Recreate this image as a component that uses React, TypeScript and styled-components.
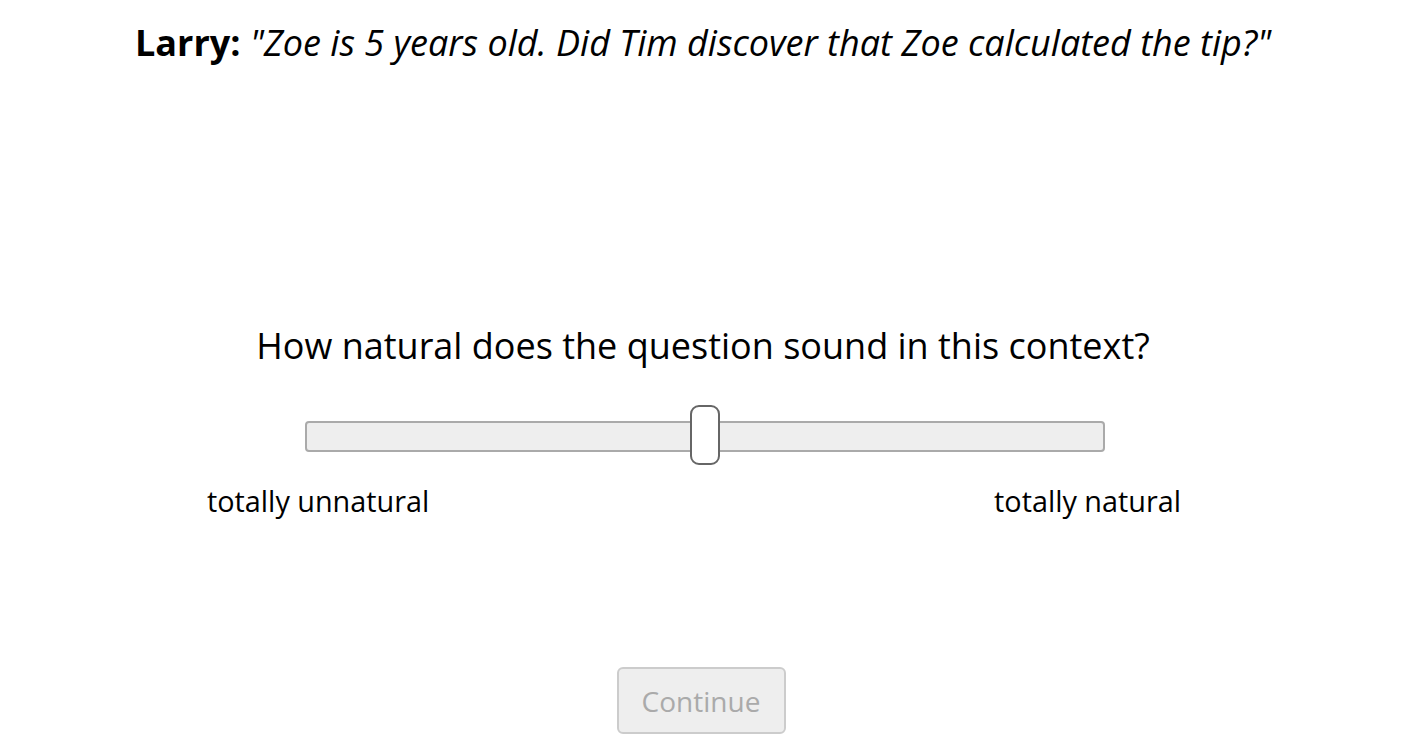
import React from "react";
import styled, { createGlobalStyle } from "styled-components";

const Global = createGlobalStyle`
  html, body { margin: 0; padding: 0; background: #fff; }
  body { font-family: "Open Sans", "Liberation Sans", sans-serif; color: #000; }
`;

const Page = styled.div`
  width: 1406px;
  display: flex;
  flex-direction: column;
  align-items: center;
`;

const Header = styled.p`
  margin: 18px 0 0;
  font-size: 36px;
  line-height: 50px;
  text-align: center;
`;

const Speaker = styled.b`
  font-weight: 700;
`;

const Quote = styled.i`
  font-style: italic;
`;

const Question = styled.p`
  margin: 253px 0 0;
  font-size: 36px;
  line-height: 50px;
  text-align: center;
`;

const SliderWrap = styled.div`
  position: relative;
  width: 800px;
  height: 60px;
  margin-top: 34px;
  margin-left: 4px;
  display: flex;
  align-items: flex-start;
`;

const Track = styled.div`
  width: 100%;
  height: 31px;
  margin-top: 16px;
  box-sizing: border-box;
  background: #eeeeee;
  border: 2px solid #aaaaaa;
  border-radius: 4px;
`;

const Thumb = styled.div`
  position: absolute;
  top: 0;
  width: 30px;
  height: 60px;
  box-sizing: border-box;
  background: #ffffff;
  border: 2px solid #666666;
  border-radius: 9px;
  transform: translateX(-50%);
`;

const LabelRow = styled.div`
  width: 974px;
  margin-top: 16px;
  margin-right: 18px;
  display: flex;
  justify-content: space-between;
`;

const Label = styled.span`
  font-size: 28.8px;
  line-height: 40px;
`;

const Button = styled.button`
  margin-top: 146px;
  margin-right: 4px;
  width: 169px;
  height: 67px;
  box-sizing: border-box;
  background: #eeeeee;
  border: 2px solid #cccccc;
  border-radius: 6px;
  color: #aaaaaa;
  font-family: "Open Sans", "Liberation Sans", sans-serif;
  font-size: 28px;
  padding: 0;
`;

export default function App() {
  const value = 50;
  return (
    <Page>
      <Global />
      <Header>
        <Speaker>Larry:</Speaker>{" "}
        <Quote>"Zoe is 5 years old. Did Tim discover that Zoe calculated the tip?"</Quote>
      </Header>
      <Question>How natural does the question sound in this context?</Question>
      <SliderWrap>
        <Track />
        <Thumb style={{ left: `${value}%` }} />
      </SliderWrap>
      <LabelRow>
        <Label>totally unnatural</Label>
        <Label>totally natural</Label>
      </LabelRow>
      <Button disabled>Continue</Button>
    </Page>
  );
}
